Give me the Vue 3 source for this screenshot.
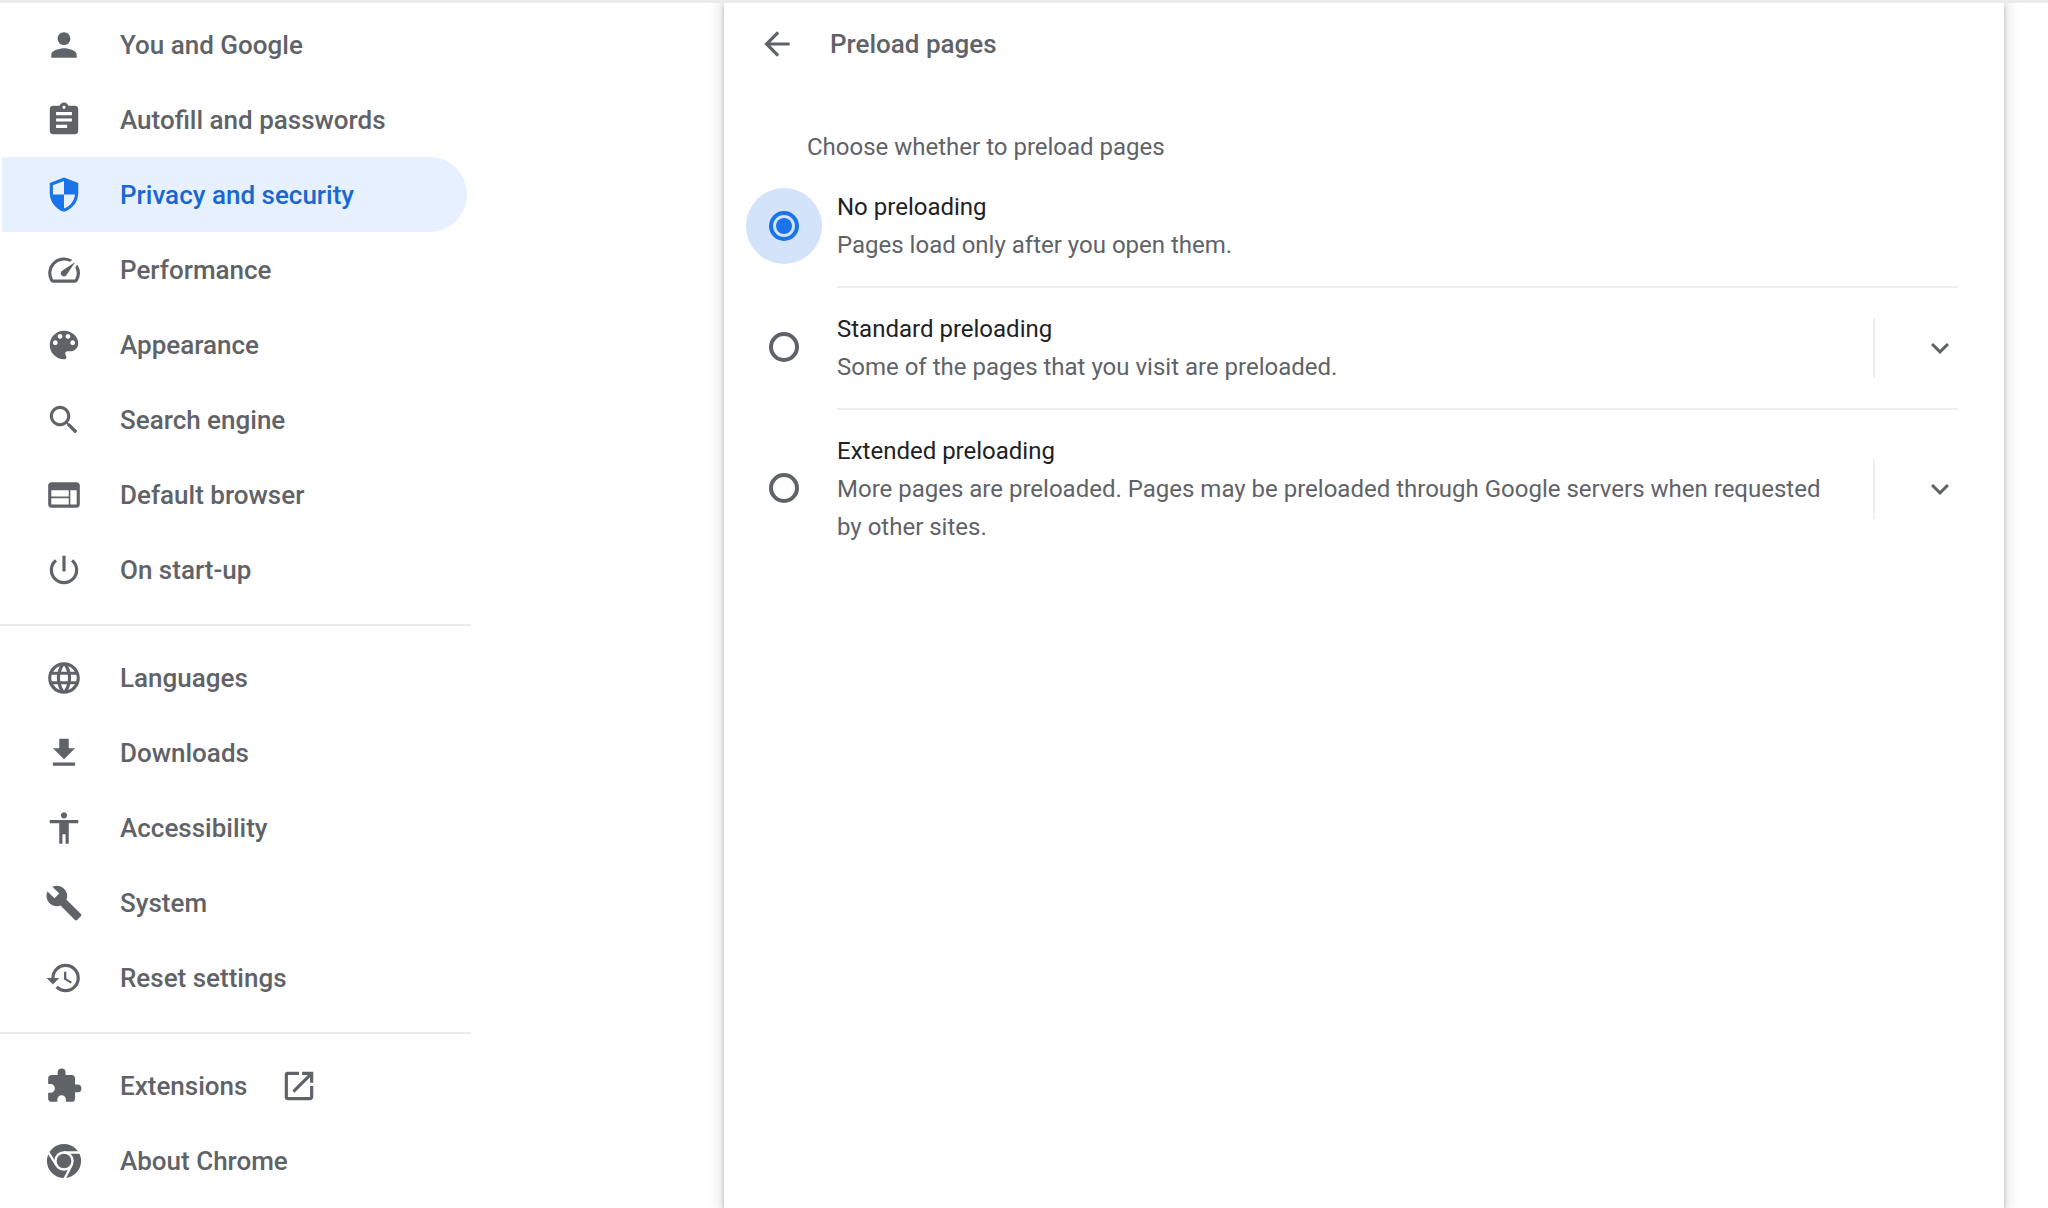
<script setup>
import { ref } from 'vue'

const groups = [
  [
    { label: 'You and Google', icon: 'M12 12c2.21 0 4-1.79 4-4s-1.79-4-4-4-4 1.79-4 4 1.79 4 4 4zm0 2c-2.67 0-8 1.34-8 4v2h16v-2c0-2.66-5.33-4-8-4z' },
    { label: 'Autofill and passwords', icon: 'M19 3h-4.18C14.4 1.84 13.3 1 12 1c-1.3 0-2.4.84-2.82 2H5c-1.1 0-2 .9-2 2v14c0 1.1.9 2 2 2h14c1.1 0 2-.9 2-2V5c0-1.1-.9-2-2-2zm-7 0c.55 0 1 .45 1 1s-.45 1-1 1-1-.45-1-1 .45-1 1-1zm2 14H7v-2h7v2zm3-4H7v-2h10v2zm0-4H7V7h10v2z' },
    { label: 'Privacy and security', icon: 'M12 1 3 4.4v6.4c0 5.4 3.84 10.5 9 11.8 5.16-1.3 9-6.4 9-11.8V4.4zM12 3.2v8.5h7c-.55 4.1-3.3 7.7-7 8.8v-8.8H5V5.8z' },
    { label: 'Performance', icon: 'm20.38 8.57-1.23 1.85a8 8 0 0 1-.22 7.58H5.07A8 8 0 0 1 15.58 6.85l1.85-1.23A10 10 0 0 0 3.35 19a2 2 0 0 0 1.72 1h13.85a2 2 0 0 0 1.74-1 10 10 0 0 0-.27-10.44zM10.59 15.41a2 2 0 0 0 2.83 0l5.66-8.49-8.49 5.66a2 2 0 0 0 0 2.83z' },
    { label: 'Appearance', icon: 'M12 3c-4.97 0-9 4.03-9 9s4.03 9 9 9c.83 0 1.5-.67 1.5-1.5 0-.39-.15-.74-.39-1.01-.23-.26-.38-.61-.38-.99 0-.83.67-1.5 1.5-1.5H16c2.76 0 5-2.24 5-5 0-4.42-4.03-8-9-8zm-5.5 9c-.83 0-1.5-.67-1.5-1.5S5.67 9 6.5 9 8 9.67 8 10.5 7.33 12 6.5 12zm3-4C8.67 8 8 7.33 8 6.5S8.67 5 9.5 5s1.5.67 1.5 1.5S10.33 8 9.5 8zm5 0c-.83 0-1.5-.67-1.5-1.5S13.67 5 14.5 5s1.5.67 1.5 1.5S15.33 8 14.5 8zm3 4c-.83 0-1.5-.67-1.5-1.5S16.67 9 17.5 9s1.5.67 1.5 1.5-.67 1.5-1.5 1.5z' },
    { label: 'Search engine', icon: 'M15.5 14h-.79l-.28-.27A6.471 6.471 0 0 0 16 9.5 6.5 6.5 0 1 0 9.5 16c1.61 0 3.09-.59 4.23-1.57l.27.28v.79l5 4.99L20.49 19l-4.99-5zm-6 0C7.01 14 5 11.99 5 9.5S7.01 5 9.5 5 14 7.01 14 9.5 11.99 14 9.5 14z' },
    { label: 'Default browser', icon: 'M20 4H4c-1.1 0-2 .9-2 2v12c0 1.1.9 2 2 2h16c1.1 0 2-.9 2-2V6c0-1.1-.9-2-2-2zm-5 14H4v-4h11v4zm0-5H4V9h11v4zm5 5h-4V9h4v9z' },
    { label: 'On start-up', icon: 'M13 3h-2v10h2V3zm4.83 2.17-1.42 1.42A6.92 6.92 0 0 1 19 12c0 3.87-3.13 7-7 7s-7-3.13-7-7c0-2.19 1.01-4.14 2.58-5.42L6.17 5.17A8.932 8.932 0 0 0 3 12a9 9 0 0 0 18 0c0-2.74-1.23-5.18-3.17-6.83z' }
  ],
  [
    { label: 'Languages', icon: 'M11.99 2C6.47 2 2 6.48 2 12s4.47 10 9.99 10C17.52 22 22 17.52 22 12S17.52 2 11.99 2zm6.93 6h-2.95a15.65 15.65 0 0 0-1.38-3.56A8.03 8.03 0 0 1 18.92 8zM12 4.04c.83 1.2 1.48 2.53 1.91 3.96h-3.82c.43-1.43 1.08-2.76 1.91-3.96zM4.26 14C4.1 13.36 4 12.69 4 12s.1-1.36.26-2h3.38c-.08.66-.14 1.32-.14 2s.06 1.34.14 2H4.26zm.82 2h2.95c.32 1.25.78 2.45 1.38 3.56A7.987 7.987 0 0 1 5.08 16zm2.95-8H5.08a7.987 7.987 0 0 1 4.33-3.56A15.65 15.65 0 0 0 8.03 8zM12 19.96c-.83-1.2-1.48-2.53-1.91-3.96h3.82c-.43 1.43-1.08 2.76-1.91 3.96zM14.34 14H9.66c-.09-.66-.16-1.32-.16-2s.07-1.35.16-2h4.68c.09.65.16 1.32.16 2s-.07 1.34-.16 2zm.25 5.56c.6-1.11 1.06-2.31 1.38-3.56h2.95a8.03 8.03 0 0 1-4.33 3.56zM16.36 14c.08-.66.14-1.32.14-2s-.06-1.34-.14-2h3.38c.16.64.26 1.31.26 2s-.1 1.36-.26 2h-3.38z' },
    { label: 'Downloads', icon: 'M19 9h-4V3H9v6H5l7 7 7-7zM5 18v2h14v-2H5z' },
    { label: 'Accessibility', icon: 'M12 2c1.1 0 2 .9 2 2s-.9 2-2 2-2-.9-2-2 .9-2 2-2zm9 7h-6v13h-2v-6h-2v6H9V9H3V7h18v2z' },
    { label: 'System', icon: 'm22.7 19-9.1-9.1c.9-2.3.4-5-1.5-6.9-2-2-5-2.4-7.4-1.3L9 6 6 9 1.6 4.7C.4 7.1.9 10.1 2.9 12.1c1.9 1.9 4.6 2.4 6.9 1.5l9.1 9.1c.4.4 1 .4 1.4 0l2.3-2.3c.5-.4.5-1.1.1-1.4z' },
    { label: 'Reset settings', icon: 'M13 3a9 9 0 0 0-9 9H1l3.89 3.89.07.14L9 12H6c0-3.87 3.13-7 7-7s7 3.13 7 7-3.13 7-7 7c-1.93 0-3.68-.79-4.94-2.06l-1.42 1.42A8.954 8.954 0 0 0 13 21a9 9 0 0 0 0-18zm-1 5v5l4.28 2.54.72-1.21-3.5-2.08V8H12z' }
  ],
  [
    { label: 'Extensions', external: true, icon: 'M20.5 11H19V7c0-1.1-.9-2-2-2h-4V3.5a2.5 2.5 0 0 0-5 0V5H4c-1.1 0-1.99.9-1.99 2v3.8H3.5c1.49 0 2.7 1.21 2.7 2.7s-1.21 2.7-2.7 2.7H2V20c0 1.1.9 2 2 2h3.8v-1.5c0-1.49 1.21-2.7 2.7-2.7 1.49 0 2.7 1.21 2.7 2.7V22H17c1.1 0 2-.9 2-2v-4h1.5a2.5 2.5 0 0 0 0-5z' },
    { label: 'About Chrome', chrome: true }
  ]
]

const options = [
  { id: 'none', title: 'No preloading', text: 'Pages load only after you open them.' },
  { id: 'standard', title: 'Standard preloading', text: 'Some of the pages that you visit are preloaded.', expandable: true },
  { id: 'extended', title: 'Extended preloading', text: 'More pages are preloaded. Pages may be preloaded through Google servers when requested by other sites.', expandable: true }
]

const current = ref('Privacy and security')
const selected = ref('none')
</script>

<template>
  <div class="settings">
    <nav class="sidebar">
      <div v-for="(group, i) in groups" :key="i" class="menu-group">
        <a
          v-for="item in group"
          :key="item.label"
          href="#"
          class="menu-item"
          :class="{ active: item.label === current }"
          @click.prevent="current = item.label"
        >
          <svg v-if="item.chrome" class="icon" viewBox="0 0 24 24" aria-hidden="true">
            <circle cx="12" cy="12" r="10.8" fill="currentColor" />
            <circle cx="12" cy="12" r="5.4" class="logo-line" />
            <path d="M12 6.6h10.5M7.3 14.7 1.9 6.2M16.7 14.7l-4.5 8.8" class="logo-line" />
          </svg>
          <svg v-else class="icon" viewBox="0 0 24 24" aria-hidden="true">
            <path :d="item.icon" fill="currentColor" fill-rule="evenodd" />
          </svg>
          <span>{{ item.label }}</span>
          <svg v-if="item.external" class="icon" viewBox="0 0 24 24" aria-hidden="true">
            <path d="M19 19H5V5h7V3H5a2 2 0 0 0-2 2v14a2 2 0 0 0 2 2h14c1.1 0 2-.9 2-2v-7h-2v7zM14 3v2h3.59l-9.83 9.83 1.41 1.41L19 6.41V10h2V3h-7z" fill="currentColor" />
          </svg>
        </a>
      </div>
    </nav>

    <main class="content">
      <section class="panel">
        <header class="panel-header">
          <button class="icon-btn" type="button" aria-label="Back">
            <svg class="icon" viewBox="0 0 24 24" aria-hidden="true">
              <path d="M20 11H7.83l5.59-5.59L12 4l-8 8 8 8 1.41-1.41L7.83 13H20v-2z" fill="currentColor" />
            </svg>
          </button>
          <h1>Preload pages</h1>
        </header>

        <p class="intro">Choose whether to preload pages</p>

        <div class="options" role="radiogroup" aria-label="Choose whether to preload pages">
          <div v-for="option in options" :key="option.id" class="option">
            <span class="ripple" :class="{ on: selected === option.id }">
              <input :id="option.id" v-model="selected" type="radio" name="preload" :value="option.id" />
            </span>
            <div class="option-body">
              <label :for="option.id">
                <span class="option-title">{{ option.title }}</span>
                <span class="option-text">{{ option.text }}</span>
              </label>
              <div v-if="option.expandable" class="expand">
                <button class="icon-btn" type="button" :aria-label="'Show more about ' + option.title">
                  <svg class="icon chevron" viewBox="0 0 24 24" aria-hidden="true">
                    <path d="M16.59 8.59 12 13.17 7.41 8.59 6 10l6 6 6-6z" fill="currentColor" />
                  </svg>
                </button>
              </div>
            </div>
          </div>
        </div>
      </section>
    </main>
  </div>
</template>

<style>
body {
  background: #fff;
}
</style>

<style scoped>
.settings {
  display: flex;
  min-height: 100vh;
  box-sizing: border-box;
  border-top: 3px solid #ebebeb;
  overflow: hidden;
  font-family: Roboto, sans-serif;
  color: #5f6368;
}

/* ── Sidebar ── */
.sidebar {
  width: 471px;
  flex-shrink: 0;
  padding-top: 4px;
}

.menu-group + .menu-group {
  margin-top: 17px;
  padding-top: 14px;
  border-top: 2px solid #ebebeb;
}

.menu-item {
  display: flex;
  align-items: center;
  height: 75px;
  margin: 0 4px 0 2px;
  padding-left: 43px;
  gap: 37px;
  border-radius: 0 38px 38px 0;
  box-sizing: border-box;
  color: #5f6368;
  font-size: 26px;
  font-weight: 500;
  text-decoration: none;
}

.menu-item.active {
  background: #e6f0fe;
  color: #1967d2;
}

.menu-item.active .icon {
  color: #1a73e8;
}

.menu-item span + .icon {
  margin-left: -4px;
}

.icon {
  display: block;
  width: 38px;
  height: 38px;
  flex-shrink: 0;
}

.logo-line {
  fill: none;
  stroke: #fff;
  stroke-width: 1.5;
}

/* ── Panel ── */
.content {
  flex: 1;
  display: flex;
  min-width: 0;
  padding: 0 44px 0 253px;
}

.panel {
  flex: 1;
  min-width: 0;
  background: #fff;
  box-shadow: 0 2px 4px rgba(60, 64, 67, 0.3), 0 2px 12px 4px rgba(60, 64, 67, 0.15);
}

.panel-header {
  display: flex;
  align-items: center;
  gap: 34px;
  height: 82px;
  padding-left: 34px;
}

h1 {
  margin: 0;
  font-size: 26px;
  font-weight: 500;
}

.icon-btn {
  padding: 0;
  border: 0;
  background: none;
  color: #5f6368;
  cursor: pointer;
}

.intro {
  margin: 0;
  padding: 43px 83px 0;
  font-size: 24px;
  line-height: 38px;
}

/* ── Options ── */
.options {
  padding: 0 46px 0 22px;
}

.option {
  display: flex;
}

.ripple {
  display: flex;
  align-items: center;
  justify-content: center;
  align-self: center;
  width: 76px;
  height: 76px;
  margin-right: 15px;
  border-radius: 50%;
  flex-shrink: 0;
}

.ripple.on {
  background: #d2e3fa;
}

input[type='radio'] {
  appearance: none;
  display: grid;
  place-content: center;
  width: 30px;
  height: 30px;
  margin: 0;
  border: 4px solid #5f6368;
  border-radius: 50%;
  box-sizing: border-box;
}

input[type='radio']:checked {
  border-color: #1a73e8;
}

input[type='radio']:checked::before {
  content: '';
  width: 16px;
  height: 16px;
  border-radius: 50%;
  background: #1a73e8;
}

.option-body {
  flex: 1;
  display: flex;
  align-items: center;
  padding: 22px 0;
}

.option + .option .option-body {
  border-top: 2px solid #eee;
}

label {
  flex: 1;
  font-size: 24px;
  line-height: 38px;
}

.option-title,
.option-text {
  display: block;
}

.option-title {
  color: #202124;
}

.expand {
  display: flex;
  align-items: center;
  height: 60px;
  margin-left: 34px;
  padding-left: 47px;
  border-left: 2px solid #eee;
}

.chevron {
  width: 36px;
  height: 36px;
}
</style>
